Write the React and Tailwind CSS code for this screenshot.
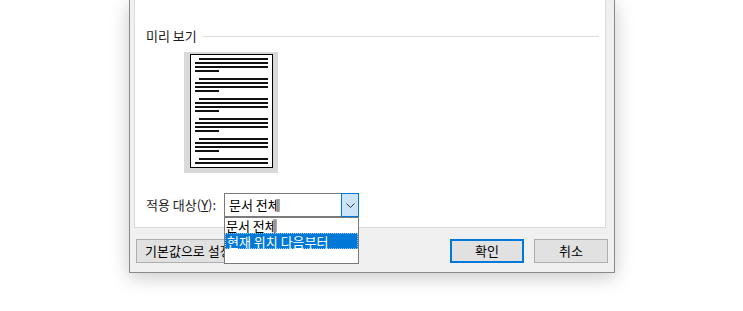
import React from "react";

function Line({ indent, short }) {
  return (
    <div
      className={
        "h-[2px] bg-[#111] " +
        (short ? "ml-[4px] w-[24px]" : indent ? "ml-[8px] w-[69px]" : "ml-[4px] w-[73px]")
      }
    />
  );
}

function Group({ last }) {
  return (
    <div className="flex flex-col gap-[2px]">
      <Line indent />
      <Line />
      {!last && <Line />}
      {!last && <Line short />}
    </div>
  );
}

function Caret() {
  return <span className="inline-block w-[4px] h-[13px] -ml-[4px] bg-[#9a9a9a] opacity-80 align-middle" />;
}

export default function App() {
  return (
    <div className="w-[743px] h-[311px] bg-white overflow-hidden font-['Noto_Sans_CJK_KR',sans-serif] text-[13px] text-black">
      <div className="ml-[129px] w-[486px] h-[273px] bg-[#f0f0f0] border-x border-b border-[#8a8a8a] shadow-[0_4px_18px_rgba(0,0,0,0.22)] flex flex-col">
        {/* white panel */}
        <div className="ml-[4px] w-[472px] h-[228px] bg-white border-x border-b border-[#dadada] pl-[11px] pr-[6px] flex flex-col">
          <div className="mt-[29px] h-[14px] flex items-center gap-[6px]">
            <span className="leading-[14px] text-[#1a1a1a]">미리 보기</span>
            <div className="flex-1 h-px bg-[#dcdcdc]" />
          </div>
          <div className="mt-[9px] ml-[38px] w-[94px] h-[121px] bg-[#d9d9d9] pt-[2px] pl-[6px]">
            <div className="w-[83px] h-[114px] border border-black bg-white pt-[3px] flex flex-col gap-[6px]">
              <Group />
              <Group />
              <Group />
              <Group />
              <Group />
              <Group last />
            </div>
          </div>
          <div className="mt-[20px] h-[24px] flex items-center">
            <span className="w-[78px] leading-[14px] text-[#1a1a1a] whitespace-nowrap">
              적용 대상(<span className="underline">Y</span>):
            </span>
            <div className="relative w-[135px] h-[24px] border border-[#7a7a7a] bg-white flex items-center pl-[4px]">
              <span className="leading-[14px]">
                문서 전체
                <Caret />
              </span>
              <div className="absolute -top-px -right-px -bottom-px w-[18px] border border-[#0078d7] bg-[#cce4f7] flex items-center justify-center">
                <svg width="9" height="5" viewBox="0 0 9 5">
                  <path d="M0.5 0.5 L4.5 4.5 L8.5 0.5" fill="none" stroke="#333" strokeWidth="1" />
                </svg>
              </div>
              <div className="absolute left-[-1px] top-[23px] w-[135px] h-[47px] border border-[#7a7a7a] bg-white z-10 flex flex-col">
                <div className="h-[15px] pl-[1px] whitespace-nowrap flex items-center">
                  <span className="leading-[13px]">문서 전체</span>
                  <Caret />
                </div>
                <div className="h-[16px] pl-[1px] bg-[#0078d7] text-white border border-dotted border-[#9cc8f0] whitespace-nowrap flex items-center">
                  <span className="leading-[13px]">현재 위치 다음부터</span>
                </div>
              </div>
            </div>
          </div>
        </div>
        {/* buttons */}
        <div className="mt-[11px] h-[24px] pl-[6px] pr-[6px] flex items-center">
          <div className="w-[130px] h-[24px] bg-[#e1e1e1] border border-[#adadad] flex items-center pl-[8px]">
            기본값으로 설정
          </div>
          <div className="flex-1" />
          <div className="w-[74px] h-[24px] bg-[#e1e1e1] border-2 border-[#0078d7] flex items-center justify-center">
            확인
          </div>
          <div className="ml-[10px] w-[74px] h-[24px] bg-[#e1e1e1] border border-[#adadad] flex items-center justify-center">
            취소
          </div>
        </div>
      </div>
    </div>
  );
}
